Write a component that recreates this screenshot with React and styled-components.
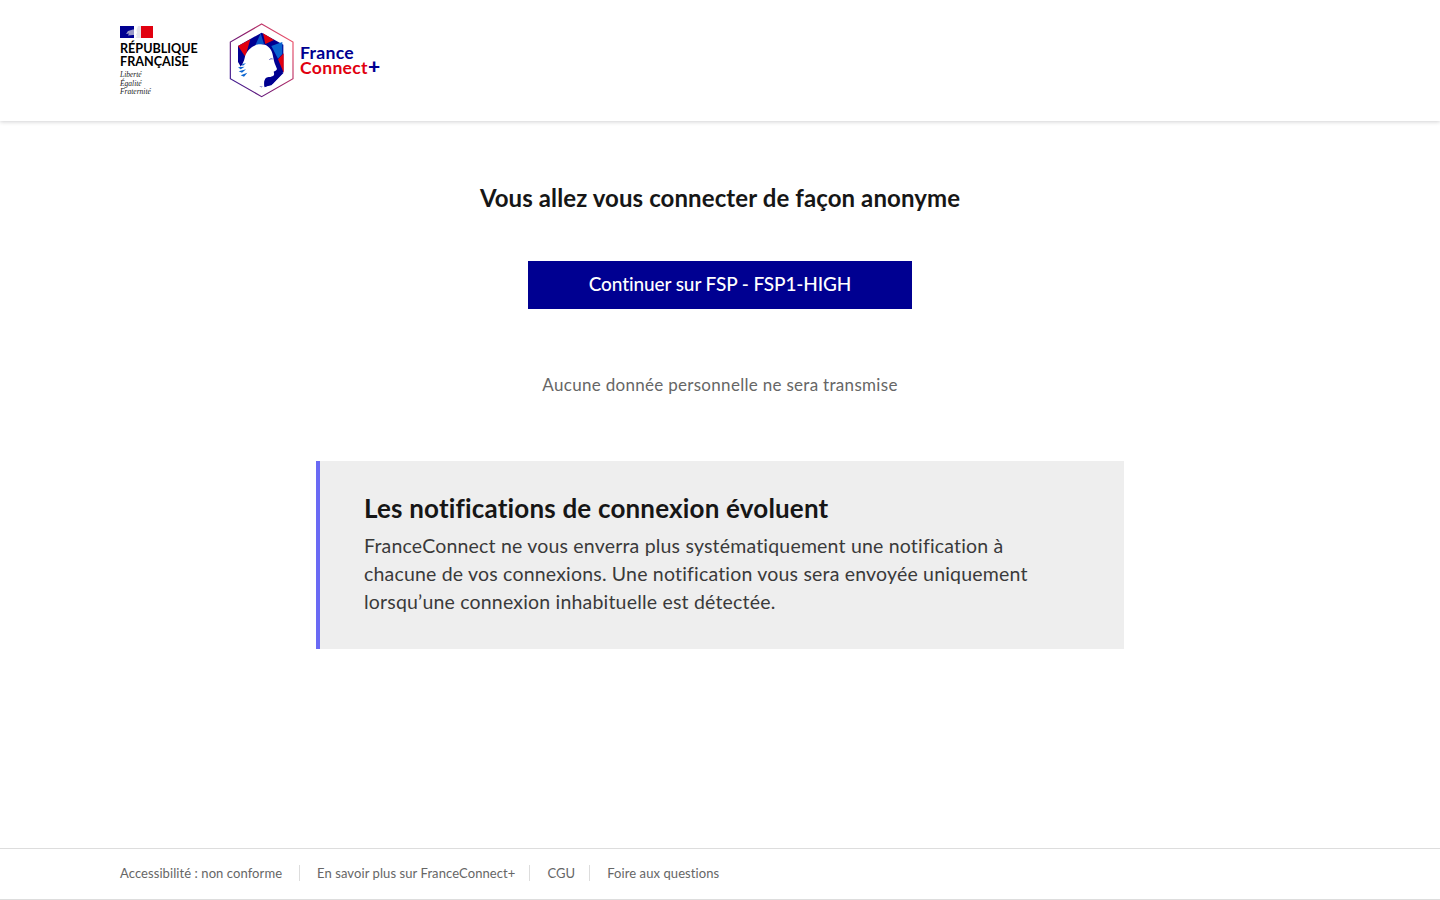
import React from "react";
import styled, { createGlobalStyle } from "styled-components";

const GlobalStyle = createGlobalStyle`
  html, body {
    margin: 0;
    padding: 0;
    background: #fff;
    font-family: Lato, "Open Sans", sans-serif;
    font-variant-ligatures: none;
    color: #161616;
  }
  * { box-sizing: border-box; }
`;

const Page = styled.div`
  width: 100%;
  height: 900px;
  display: flex;
  flex-direction: column;
  overflow: hidden;
`;

const Header = styled.header`
  flex: 0 0 121px;
  height: 121px;
  padding: 24px 120px 0;
  display: flex;
  align-items: flex-start;
  gap: 30px;
  box-shadow: 0 1px 4px rgba(0, 0, 18, 0.18);
`;

const Marianne = styled.div`
  width: 78px;
  padding-top: 2px;
  display: flex;
  flex-direction: column;
`;

const RfName = styled.div`
  margin-top: 4px;
  font-weight: 700;
  font-size: 12.6px;
  line-height: 13px;
  color: #000;
  white-space: nowrap;
`;

const Motto = styled.div`
  margin-top: 3px;
  font-family: "Liberation Serif", serif;
  font-style: italic;
  font-size: 7.5px;
  line-height: 8.5px;
  color: #222;
`;

const FcLogo = styled.div`
  margin-top: -2px;
  display: flex;
  align-items: center;
  gap: 4px;
  height: 76px;
`;

const FcName = styled.div`
  font-weight: 700;
  font-size: 17.6px;
  line-height: 15px;
  letter-spacing: 0.3px;
  white-space: nowrap;
`;

const FcLine = styled.div`
  color: ${(props) => props.color};
`;

const FcPlus = styled.span`
  color: #000091;
  font-size: 21px;
  line-height: 0;
  font-weight: 900;
`;

const Main = styled.main`
  flex: 1;
  padding-top: 61px;
  display: flex;
  flex-direction: column;
  align-items: center;
`;

const Title = styled.h1`
  margin: 0;
  font-size: 24px;
  line-height: 32px;
  letter-spacing: 0.1px;
  font-weight: 700;
  color: #161616;
`;

const Continue = styled.button`
  margin-top: 47px;
  width: 384px;
  height: 48px;
  padding: 0 0 3px;
  border: 0;
  background: #000091;
  color: #fff;
  font-family: inherit;
  font-size: 19px;
  letter-spacing: -0.1px;
  font-weight: 500;
`;

const Note = styled.p`
  margin: 64px 0 0;
  font-size: 17px;
  line-height: 24px;
  letter-spacing: 0.3px;
  color: #666;
`;

const Callout = styled.section`
  margin-top: 64px;
  width: 808px;
  height: 188px;
  padding: 31px 44px;
  background: #eee;
  border-left: 4px solid #6a6af4;
`;

const CalloutTitle = styled.h2`
  margin: 0 0 8px;
  font-size: 26px;
  line-height: 32px;
  letter-spacing: 0.18px;
  font-weight: 700;
  color: #161616;
`;

const CalloutText = styled.p`
  margin: 0;
  font-size: 19.5px;
  line-height: 28px;
  letter-spacing: 0.19px;
  color: #3a3a3a;
`;

const Footer = styled.footer`
  flex: 0 0 52px;
  height: 52px;
  padding: 0 120px 2px;
  display: flex;
  align-items: center;
  border-top: 1px solid #ddd;
  border-bottom: 1px solid #ddd;
`;

const FooterLink = styled.a`
  font-size: 13px;
  line-height: 16px;
  letter-spacing: 0.08px;
  color: #666;
  white-space: nowrap;
  padding: 0 14px 0 17px;
  border-left: 1px solid #ddd;
  &:first-child {
    padding: 0 17px 0 0;
    border-left: 0;
  }
`;

const Flag = () => (
  <svg width="33" height="12" viewBox="0 0 33 12">
    <rect width="33" height="12" fill="#fff" />
    <rect width="14" height="12" fill="#000091" />
    <rect x="21" width="12" height="12" fill="#e1000f" />
    <path d="M13 3.500L8 5 6 8l3-.5-1 2 5-.5 1 0V3.500z" fill="#9a9ac8" />
    <path d="M18 0h3v12h-5.500l1.500-2-1-1.500 1-1.500-.5-3z" fill="#e4e4ea" />
  </svg>
);

// drawn in 3x coordinates of the 68x76 logo box
const Hexagon = () => (
  <svg width="68" height="76" viewBox="0 0 204 228">
    <defs>
      <linearGradient id="hexStroke" x1="0" y1="1" x2="1" y2="0.300">
        <stop offset="0" stopColor="#2a1a9a" />
        <stop offset="0.550" stopColor="#8a1a6a" />
        <stop offset="1" stopColor="#e8506a" />
      </linearGradient>
    </defs>
    <path d="M101 6L195 60V170L101 224L7 170V60Z" fill="#fff" stroke="url(#hexStroke)" strokeWidth="3.500" />
    <path d="M101 32L166 68V150L130 190L100 196L60 170L30 120V72Z" fill="#000091" />
    <path d="M30 72L67 52L52 104Z" fill="#e1000f" />
    <path d="M105 34L138 54L112 66Z" fill="#e1000f" />
    <path d="M98 34L82 70L108 66Z" fill="#0a55c8" />
    <path d="M130 72L163 60V96L150 110Z" fill="#0a64d0" />
    <path d="M167 94V152L150 112Z" fill="#e1000f" />
    <path d="M50 108C54 88 72 70 92 67C112 64 128 74 133 94C136 106 137 116 140 124L147 141C146 146 140 147 137 149C139 154 139 160 136 163C130 167 120 163 114 168C109 172 108 182 110 196L60 186L22 150C32 142 46 128 50 108Z" fill="#fff" />
    <path d="M124 113C127 110 131 110 134 111" stroke="#000091" strokeWidth="2" fill="none" />
    <path d="M42 126L54 124L44 132Z M30 136L50 134L38 142Z M32 148L54 142L42 152Z M38 160L58 152L48 164Z" fill="#0a64d0" />
    <path d="M112 172C120 166 132 166 150 152L167 152L134 186L110 196C108 188 108 178 112 172Z" fill="#000091" />
  </svg>
);

const footerLinks = [
  "Accessibilité : non conforme",
  "En savoir plus sur FranceConnect+",
  "CGU",
  "Foire aux questions",
];

export default function App() {
  return (
    <>
      <GlobalStyle />
      <Page>
        <Header>
          <Marianne>
            <Flag />
            <RfName>
              RÉPUBLIQUE
              <br />
              FRANÇAISE
            </RfName>
            <Motto>
              Liberté
              <br />
              Égalité
              <br />
              Fraternité
            </Motto>
          </Marianne>
          <FcLogo>
            <Hexagon />
            <FcName>
              <FcLine color="#000091">France</FcLine>
              <FcLine color="#e1000f">
                Connect<FcPlus>+</FcPlus>
              </FcLine>
            </FcName>
          </FcLogo>
        </Header>
        <Main>
          <Title>Vous allez vous connecter de façon anonyme</Title>
          <Continue>Continuer sur FSP - FSP1-HIGH</Continue>
          <Note>Aucune donnée personnelle ne sera transmise</Note>
          <Callout>
            <CalloutTitle>Les notifications de connexion évoluent</CalloutTitle>
            <CalloutText>
              FranceConnect ne vous enverra plus systématiquement une notification à
              <br />
              chacune de vos connexions. Une notification vous sera envoyée uniquement
              <br />
              lorsqu’une connexion inhabituelle est détectée.
            </CalloutText>
          </Callout>
        </Main>
        <Footer>
          {footerLinks.map((label) => (
            <FooterLink key={label}>{label}</FooterLink>
          ))}
        </Footer>
      </Page>
    </>
  );
}
